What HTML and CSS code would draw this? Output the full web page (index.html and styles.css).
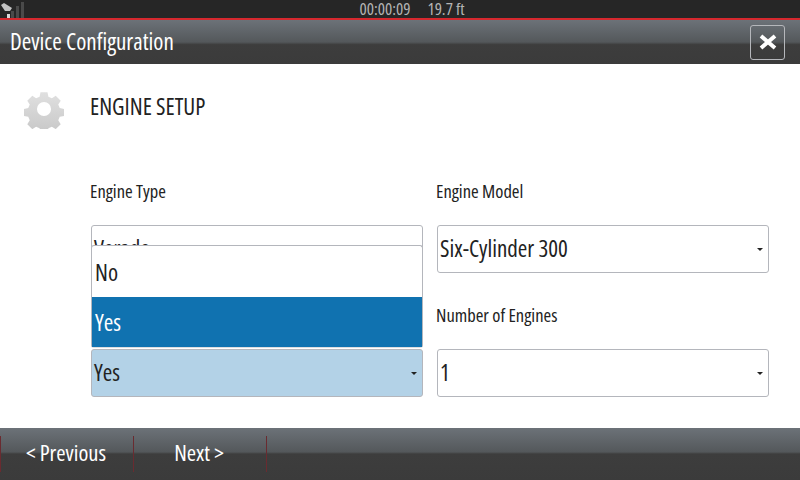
FILE: index.html
```html
<!DOCTYPE html>
<html lang="en">
<head>
    <meta charset="UTF-8" />
    <title>Device Configuration</title>
    <link rel="stylesheet" href="styles.css">
</head>
<body>
    <!-- STATUS BAR -->
    <div class="status-bar">
        <svg class="signal" width="26" height="18" viewBox="0 0 26 18">
            <rect x="11" y="11" width="3" height="7" fill="#4a4a4a" />
            <rect x="16" y="6" width="3" height="12" fill="#4a4a4a" />
            <rect x="21" y="2" width="3" height="16" fill="#4a4a4a" />
            <path d="M1 5 L4 3 L12 8 L10 11 L5 11 Z" fill="#c4c4c4" />
            <rect x="7" y="14" width="3" height="4" fill="#d8d8d8" />
        </svg>
        <span>00:00:09</span>
        <span>19.7 ft</span>
    </div>

    <!-- TITLE BAR -->
    <div class="title-bar">
        <div class="title">Device Configuration</div>
        <button class="close">
            <svg width="20" height="20" viewBox="0 0 20 20">
                <path d="M3 4 L17 16 M17 4 L3 16" stroke="#fff" stroke-width="4" />
            </svg>
        </button>
    </div>

    <!-- MAIN -->
    <div class="main">
        <div class="heading">
            <svg class="gear" width="40" height="40" viewBox="0 0 40 40">
                <defs>
                    <linearGradient id="gear-fill" x1="0" y1="0" x2="0" y2="1">
                        <stop offset="0" stop-color="#e0e0e0" />
                        <stop offset="1" stop-color="#c8c8c8" />
                    </linearGradient>
                </defs>
                <path fill="url(#gear-fill)" fill-rule="evenodd" d="M16 1h8l1 5 4 1.700 4.300-2.800 5.700 5.700-2.800 4.300 1.700 4 5 1v8l-5 1-1.700 4 2.800 4.300-5.700 5.700-4.300-2.800-4 1.700-1 5h-8l-1-5-4-1.700-4.300 2.800-5.700-5.700 2.800-4.300-1.700-4-5-1v-8l5-1 1.700-4-2.800-4.300 5.700-5.700 4.300 2.800 4-1.700z M20 12a8 8 0 1 0 0 16a8 8 0 1 0 0-16z" transform="translate(2.400 2.400) scale(0.88)" />
            </svg>
            <h1>ENGINE SETUP</h1>
        </div>

        <div class="form">
            <div class="field">
                <label>Engine Type</label>
                <div class="select">
                    <span>Verado</span>
                    <i class="arrow"></i>
                </div>
            </div>
            <div class="field">
                <label>Engine Model</label>
                <div class="select">
                    <span>Six-Cylinder 300</span>
                    <i class="arrow"></i>
                </div>
            </div>
            <div class="field">
                <label>&nbsp;</label>
                <div class="select active">
                    <span>Yes</span>
                    <i class="arrow"></i>
                </div>
            </div>
            <div class="field">
                <label>Number of Engines</label>
                <div class="select">
                    <span>1</span>
                    <i class="arrow"></i>
                </div>
            </div>

            <!-- Open dropdown sits over the left column -->
            <ul class="dropdown">
                <li>No</li>
                <li class="selected">Yes</li>
            </ul>
        </div>
    </div>

    <!-- FOOTER -->
    <div class="footer">
        <button class="nav-btn">&lt; Previous</button>
        <button class="nav-btn">Next &gt;</button>
    </div>
</body>
</html>
```

FILE: styles.css
```css
* {
    box-sizing: border-box;
}
body {
    margin: 0;
    width: 800px;
    height: 480px;
    overflow: hidden;
    background: #fff;
    font-family: "Open Sans", "Noto Sans", sans-serif;
    font-stretch: condensed;
    color: #222;
    display: flex;
    flex-direction: column;
}

/* Status bar */
.status-bar {
    height: 20px;
    flex: none;
    position: relative;
    background: #262626;
    border-bottom: 2px solid #d5282e;
    color: #b4b4b4;
    font-size: 17px;
    line-height: 18px;
    display: flex;
    justify-content: center;
    gap: 17px;
    padding-left: 24px;
}
.signal {
    position: absolute;
    left: 0;
    top: 0;
}

/* Title bar */
.title-bar {
    height: 44px;
    flex: none;
    background: linear-gradient(#6c7278, #54585b 50%, #3d3d3d 56%, #3b3b3b);
    display: flex;
    justify-content: space-between;
    align-items: center;
    padding: 0 15px 0 10px;
}
.title {
    color: #fff;
    font-size: 23px;
    margin-top: -2px;
}
.close {
    width: 35px;
    height: 35px;
    padding: 0;
    background: transparent;
    border: 1px solid #b5b7bb;
    border-radius: 3px;
    display: flex;
    justify-content: center;
    align-items: center;
}

/* Main */
.main {
    flex: 1;
    padding: 0 31px 0 24px;
}
.heading {
    display: flex;
    align-items: flex-start;
    gap: 26px;
    padding-top: 25px;
    height: 116px;
}
.heading h1 {
    margin: 1px 0 0;
    font-size: 23px;
    font-weight: 400;
}
.form {
    position: relative;
    margin-left: 67px;
    display: grid;
    grid-template-columns: 332px 332px;
    column-gap: 14px;
    row-gap: 31px;
}
.field label {
    display: block;
    height: 45px;
    font-size: 18.500px;
    line-height: 22px;
    margin-left: -1px;
}
.select {
    height: 48px;
    border: 1px solid #b4b6bc;
    border-radius: 3px;
    padding: 0 2px;
    font-size: 23px;
    display: flex;
    justify-content: space-between;
    align-items: center;
}
.select span {
    margin-bottom: 2px;
}
.select.active {
    background: #b3d2e7;
}
.arrow {
    width: 0;
    height: 0;
    margin-right: 3px;
    border-left: 3.500px solid transparent;
    border-right: 3.500px solid transparent;
    border-top: 3.500px solid #222;
}

/* Dropdown */
.dropdown {
    position: absolute;
    left: 0;
    top: 65px;
    width: 332px;
    height: 103px;
    margin: 0;
    padding: 0;
    list-style: none;
    background: #fff;
    border: 1px solid #b4b6bc;
    border-bottom-color: #dcdde0;
    border-radius: 3px;
    font-size: 23px;
}
.dropdown li {
    height: 51px;
    padding: 1px 0 0 3px;
    line-height: 50px;
}
.dropdown .selected {
    height: 50px;
    background: #1072b0;
    color: #fff;
    padding-top: 0;
}

/* Footer */
.footer {
    height: 52px;
    flex: none;
    background: linear-gradient(#6c7278, #54585b 46%, #3d3d3d 50%, #3b3b3b);
    display: flex;
    padding: 8px 0 0;
    align-items: flex-start;
}
.nav-btn {
    width: 133px;
    height: 36px;
    padding: 0 2px 4px 0;
    background: transparent;
    border: none;
    border-right: 1px solid #6a2b30;
    color: #fff;
    font-family: inherit;
    font-stretch: condensed;
    font-size: 22.500px;
}
.nav-btn:first-child {
    width: 134px;
    border-left: 1px solid #6a2b30;
}
```
